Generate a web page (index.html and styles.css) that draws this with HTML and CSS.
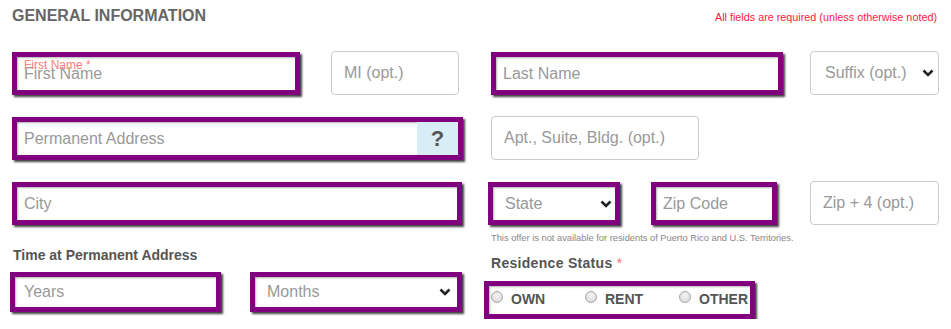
FILE: index.html
```html
<!DOCTYPE html>
<html lang="en">
<head>
  <meta charset="UTF-8" />
  <title>General Information</title>
  <link rel="stylesheet" href="styles.css">
</head>
<body>
  <div class="form">
    <div class="head">
      <h2>GENERAL INFORMATION</h2>
      <p class="req">All fields are required (unless otherwise noted)</p>
    </div>

    <div class="row row-1">
      <div class="field invalid w-first">
        <span class="float">First Name *</span>
        <span class="ph">First Name</span>
      </div>
      <div class="field w-mi"><span class="ph">MI (opt.)</span></div>
      <div class="field invalid w-last"><span class="ph">Last Name</span></div>
      <div class="field select w-suffix">
        <span class="ph">Suffix (opt.)</span>
        <svg class="chev" width="12" height="8" viewBox="0 0 12 8"><path d="M1.5 1.5 L6 6 L10.5 1.5" fill="none" stroke="#222" stroke-width="2.6"/></svg>
      </div>
    </div>

    <div class="row row-2">
      <div class="field invalid addon w-addr">
        <span class="ph">Permanent Address</span>
        <span class="help">?</span>
      </div>
      <div class="field w-apt"><span class="ph">Apt., Suite, Bldg. (opt.)</span></div>
    </div>

    <div class="row row-3">
      <div class="field invalid w-city"><span class="ph">City</span></div>
      <div class="field invalid select w-state">
        <span class="ph">State</span>
        <svg class="chev" width="12" height="8" viewBox="0 0 12 8"><path d="M1.5 1.5 L6 6 L10.5 1.5" fill="none" stroke="#222" stroke-width="2.6"/></svg>
      </div>
      <div class="field invalid w-zip"><span class="ph">Zip Code</span></div>
      <div class="field w-zip4"><span class="ph">Zip + 4 (opt.)</span></div>
    </div>

    <div class="bottom">
      <div class="col-left">
        <div class="label time-label">Time at Permanent Address</div>
        <div class="pair">
          <div class="field invalid short w-years"><span class="ph">Years</span></div>
          <div class="field invalid short select w-months">
            <span class="ph">Months</span>
            <svg class="chev" width="12" height="8" viewBox="0 0 12 8"><path d="M1.5 1.5 L6 6 L10.5 1.5" fill="none" stroke="#222" stroke-width="2.6"/></svg>
          </div>
        </div>
      </div>
      <div class="col-right">
        <p class="note">This offer is not available for residents of Puerto Rico and U.S. Territories.</p>
        <div class="label res-label">Residence Status <span class="star">*</span></div>
        <div class="radios">
          <label class="radio"><span class="dot"></span>OWN</label>
          <label class="radio"><span class="dot"></span>RENT</label>
          <label class="radio"><span class="dot"></span>OTHER</label>
        </div>
      </div>
    </div>
  </div>
</body>
</html>
```

FILE: styles.css
```css
body {
  margin: 0;
  background-color: #fff;
  font-family: "Liberation Sans", Arial, sans-serif;
  color: #555;
}

.form {
  width: 951px;
}

.head {
  display: flex;
  justify-content: space-between;
  align-items: flex-start;
  padding: 0 14px 0 12px;
  height: 51px;
}

.head h2 {
  margin: 6px 0 0 0;
  font-size: 16px;
  line-height: 20px;
  color: #666;
}

.req {
  margin: 10px 0 0 0;
  font-size: 10.8px;
  line-height: 14px;
  color: #ff1744;
}

.row {
  display: flex;
  align-items: flex-start;
  padding-left: 12px;
}

.row-2 {
  margin-top: 21px;
}

.row-3 {
  margin-top: 21px;
}

.field {
  position: relative;
  box-sizing: border-box;
  height: 44px;
  border: 1px solid #ccc;
  border-radius: 4px;
  background-color: #fff;
  display: flex;
  align-items: center;
  padding: 0 12px;
  font-size: 16px;
}

.field.invalid {
  height: 43px;
  margin-top: 1px;
  border: 5px solid #800080;
  border-radius: 0;
  padding-left: 7px;
  box-shadow: 2px 2px 2px rgba(0, 0, 0, 0.75), inset 1px 1px 2px rgba(0, 0, 0, 0.3);
}

.field.short {
  height: 40px;
}

.ph {
  color: #999;
  white-space: nowrap;
}

.float {
  position: absolute;
  left: 7px;
  top: 1px;
  font-size: 12px;
  line-height: 14px;
  color: #ff7d7d;
}

.select {
  justify-content: space-between;
}

.select .ph {
  padding-left: 2px;
}

.chev {
  flex: none;
}

.addon {
  padding-right: 0;
}

.help {
  margin-left: auto;
  align-self: stretch;
  width: 41px;
  background-color: #d9edf7;
  display: flex;
  align-items: center;
  justify-content: center;
  font-size: 22px;
  font-weight: bold;
  color: #555;
}

.w-first { width: 288px; }
.w-mi { width: 128px; margin-left: 31px; }
.w-last { width: 292px; margin-left: 32px; }
.w-suffix { width: 129px; margin-left: 27px; padding-right: 4px; }
.w-suffix .ph { padding-left: 2px; }

.w-addr { width: 451px; }
.w-apt { width: 208px; margin-left: 28px; }

.w-city { width: 450px; }
.field.w-state { width: 132px; margin-left: 26px; padding-left: 10px; padding-right: 3px; }
.w-zip { width: 126px; margin-left: 31px; }
.w-zip4 { width: 129px; margin-left: 33px; }

.bottom {
  display: flex;
  align-items: flex-start;
}

.col-left {
  width: 463px;
  padding-left: 10px;
  box-sizing: border-box;
}

.col-right {
  padding-left: 21px;
}

.label {
  font-size: 14px;
  font-weight: bold;
  color: #555;
}

.time-label {
  margin: 22px 0 0 3px;
  line-height: 17px;
}

.pair {
  display: flex;
  margin-top: 7px;
}

.field.w-years { width: 211px; padding-left: 9px; }
.field.w-months { width: 212px; margin-left: 29px; padding-left: 10px; padding-right: 6px; }

.note {
  margin: 7px 0 0 7px;
  font-size: 9.3px;
  line-height: 12px;
  color: #888;
}

.res-label {
  margin: 10px 0 0 7px;
  font-size: 14px;
  line-height: 18px;
  letter-spacing: 0.3px;
}

.star {
  color: #ff6b6b;
  font-weight: normal;
}

.radios {
  box-sizing: border-box;
  width: 271px;
  height: 38px;
  margin-top: 9px;
  border: 5px solid #800080;
  box-shadow: 2px 2px 2px rgba(0, 0, 0, 0.75), inset 1px 1px 2px rgba(0, 0, 0, 0.3);
  display: flex;
  align-items: center;
  padding: 0 0 3px 2px;
  overflow: hidden;
}

.radio {
  flex: none;
  display: flex;
  align-items: center;
  width: 94px;
  font-size: 14px;
  font-weight: bold;
  color: #555;
}

.dot {
  box-sizing: border-box;
  width: 12px;
  height: 12px;
  border-radius: 50%;
  border: 1px solid #a9a9a9;
  background: radial-gradient(circle at 50% 35%, #f4f4f4, #d4d4d4);
  margin: -4px 8px 0 0;
}
```
